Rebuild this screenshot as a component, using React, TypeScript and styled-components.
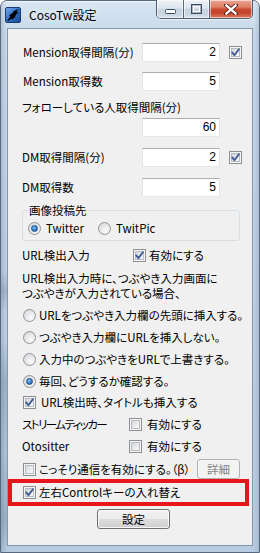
import React from 'react';
import styled, { createGlobalStyle } from 'styled-components';

const FONT = `"Noto Sans CJK JP", "Noto Sans", sans-serif`;

const GlobalStyle = createGlobalStyle`
  html, body { margin: 0; padding: 0; background: #ffffff; }
  body { font-family: ${FONT}; font-size: 12px; color: #000; }
  * { box-sizing: border-box; }
`;

const Window = styled.div`
  width: 260px;
  height: 553px;
  display: flex;
  flex-direction: column;
  padding: 0 6px 6px 6px;
  border: 1px solid #56697f;
  border-radius: 7px 7px 0 0;
  background:
    linear-gradient(180deg, rgba(0,0,0,0) 0, rgba(0,0,0,0) 270px, rgba(70,90,110,0.22) 290px, rgba(0,0,0,0) 310px, rgba(0,0,0,0) 340px, rgba(70,90,110,0.25) 380px, rgba(70,90,110,0.1) 450px, rgba(70,90,110,0.25) 520px, rgba(0,0,0,0) 553px) left top / 6px 100% no-repeat,
    linear-gradient(90deg, rgba(60,80,100,0.18) 0, rgba(255,255,255,0) 5px, rgba(255,255,255,0) 253px, rgba(60,80,100,0.15) 258px),
    linear-gradient(180deg, #d9e6f3 0%, #c6d8ea 6%, #bdd0e5 40%, #b7cbe1 100%);
  box-shadow: inset 0 1px 0 rgba(255,255,255,0.7);
`;

const TitleBar = styled.div`
  height: 27px;
  display: flex;
  align-items: flex-start;
  margin: 0 -6px;
  padding-left: 4px;
`;

const AppIcon = styled.svg`
  width: 16px;
  height: 16px;
  margin-top: 6px;
  flex: none;
`;

const TitleText = styled.span`
  margin-left: 8px;
  margin-top: 5px;
  font-family: ${FONT};
  font-size: 12px;
  line-height: 18px;
  color: #000;
  text-shadow: 0 0 6px rgba(255,255,255,0.9);
`;

const CaptionGroup = styled.div`
  margin-left: auto;
  margin-right: 6px;
  display: flex;
  height: 19px;
  margin-top: -1px;
  border: 1px solid #4b5d73;
  border-top: none;
  border-radius: 0 0 5px 5px;
  overflow: hidden;
  box-shadow: 0 1px 0 rgba(255,255,255,0.6);
`;

const CaptionButton = styled.div<{ $kind: 'min' | 'max' | 'close' }>`
  width: ${p => (p.$kind === 'close' ? 43 : 26)}px;
  height: 100%;
  display: flex;
  align-items: center;
  justify-content: center;
  border-left: ${p => (p.$kind === 'min' ? 'none' : '1px solid #56687d')};
  box-shadow: inset 0 0 0 1px rgba(255,255,255,0.55);
  background: ${p =>
    p.$kind === 'close'
      ? 'linear-gradient(180deg, #e9a593 0%, #dd7d64 40%, #c84a2f 52%, #c4432a 70%, #dc7b5a 100%)'
      : 'linear-gradient(180deg, #eef2f7 0%, #dde5ee 45%, #c9d4e1 52%, #cbd6e3 80%, #dbe4ee 100%)'};
`;

const Client = styled.div`
  flex: 1;
  display: flex;
  flex-direction: column;
  align-items: flex-start;
  background: #f0f0f0;
  border: 1px solid #8497ac;
  font-family: ${FONT};
  font-size: 11.5px;
  font-feature-settings: "palt";
  color: #000;
`;

const Row = styled.div<{ $mt?: number; $h?: number; $pl?: number }>`
  display: flex;
  align-items: center;
  height: ${p => p.$h ?? 20}px;
  margin-top: ${p => p.$mt ?? 0}px;
  padding-left: ${p => p.$pl ?? 15}px;
  width: 100%;
  white-space: nowrap;
`;

const Label = styled.span<{ $w?: number; $tight?: boolean }>`
  display: inline-block;
  width: ${p => (p.$w ? `${p.$w}px` : 'auto')};
  flex: none;
  line-height: 15px;
  letter-spacing: ${p => (p.$tight ? '-1.6px' : 'normal')};
`;

const NumberBox = styled.div`
  width: 78px;
  height: 19px;
  background: #ffffff;
  border: 1px solid #e2e3ea;
  border-top-color: #abadb3;
  border-bottom-color: #e3e9ef;
  text-align: right;
  padding-right: 3px;
  font-family: "Liberation Sans", Arial, sans-serif;
  font-size: 12px;
  line-height: 17px;
  flex: none;
`;

const BoxWrap = styled.span<{ $ml?: number }>`
  width: 13px;
  height: 13px;
  margin-left: ${p => p.$ml ?? 0}px;
  flex: none;
  position: relative;
  border: 1px solid #8f8f8f;
  background: #f6f6f6;
  display: inline-block;
`;

const BoxInner = styled.span`
  position: absolute;
  left: 1px;
  top: 1px;
  width: 9px;
  height: 9px;
  border: 1px solid #b6bcc3;
  background: linear-gradient(135deg, #d3d6da 0%, #e9eaec 55%, #fbfbfb 100%);
`;

const CheckSvg = styled.svg`
  position: absolute;
  left: 0;
  top: 0;
  width: 11px;
  height: 11px;
`;

const Check: React.FC<{ checked?: boolean; ml?: number }> = ({ checked, ml }) => (
  <BoxWrap $ml={ml}>
    <BoxInner />
    {checked && (
      <CheckSvg viewBox="0 0 11 11">
        <path d="M2.2 5.4 L4.4 8.2 L8.9 2.2" fill="none" stroke="#3f5c94" strokeWidth="1.9" strokeLinecap="round" strokeLinejoin="round" />
      </CheckSvg>
    )}
  </BoxWrap>
);

const RadioCircle = styled.span`
  width: 13px;
  height: 13px;
  flex: none;
  border-radius: 50%;
  border: 1px solid #939393;
  background: radial-gradient(circle at 65% 70%, #fbfbfb 0%, #e8e9eb 45%, #d0d3d7 100%);
  display: inline-flex;
  align-items: center;
  justify-content: center;
`;

const RadioDot = styled.span`
  width: 7px;
  height: 7px;
  border-radius: 50%;
  border: 1px solid #1f4f8e;
  background: radial-gradient(circle at 40% 35%, #8cc8f2 0%, #3f8ad4 45%, #184f9c 100%);
`;

const Radio: React.FC<{ checked?: boolean }> = ({ checked }) => (
  <RadioCircle>{checked && <RadioDot />}</RadioCircle>
);

const OptText = styled.span<{ $ml?: number }>`
  margin-left: ${p => p.$ml ?? 3}px;
  line-height: 15px;
`;

const GroupBox = styled.div`
  position: relative;
  margin-top: 13px;
  margin-left: 14px;
  width: 218px;
  height: 31px;
  border: 1px solid #d5dfe5;
  border-radius: 3px;
  display: flex;
  align-items: center;
  padding: 5px 0 0 5px;
`;

const Legend = styled.span`
  position: absolute;
  left: 5px;
  top: -8px;
  padding: 0 1px;
  background: #f0f0f0;
  line-height: 15px;
`;

const RadioItem = styled.span<{ $w?: number }>`
  display: inline-flex;
  align-items: center;
  width: ${p => (p.$w ? `${p.$w}px` : 'auto')};
`;

const Para = styled.div`
  margin-top: 6px;
  padding-left: 14px;
  white-space: nowrap;
`;

const ParaLine = styled.div`
  height: 15px;
  line-height: 15px;
`;

const PushButton = styled.div<{ $disabled?: boolean; $w: number }>`
  width: ${p => p.$w}px;
  height: 20px;
  flex: none;
  display: flex;
  align-items: center;
  justify-content: center;
  border-radius: 3px;
  border: 1px solid ${p => (p.$disabled ? '#adb2b5' : '#707070')};
  color: ${p => (p.$disabled ? '#838383' : '#000')};
  background: ${p =>
    p.$disabled
      ? '#f4f4f4'
      : 'linear-gradient(180deg, #f2f2f2 0%, #ebebeb 50%, #dddddd 51%, #cfcfcf 100%)'};
  box-shadow: inset 0 0 0 1px ${p => (p.$disabled ? '#f4f4f4' : 'rgba(255,255,255,0.8)')};
  line-height: 15px;
`;

const DetailButtonSlot = styled.div`
  margin-left: auto;
  margin-right: 12px;
`;

const Highlight = styled.div`
  width: 241px;
  height: 27px;
  margin-top: -1px;
  border: 4px solid #e8161b;
  display: flex;
  align-items: center;
  padding-left: 11px;
  white-space: nowrap;
`;

const FooterButtonRow = styled.div`
  margin-top: 3px;
  padding-left: 89px;
`;

export default function App() {
  return (
    <>
      <GlobalStyle />
      <Window>
        <TitleBar>
          <AppIcon viewBox="0 0 16 16">
            <defs>
              <linearGradient id="ig" x1="0" y1="0" x2="1" y2="1">
                <stop offset="0" stopColor="#7fb0ea" />
                <stop offset="0.5" stopColor="#2f6fc4" />
                <stop offset="1" stopColor="#1a468f" />
              </linearGradient>
            </defs>
            <rect x="0.5" y="0.5" width="15" height="15" rx="1.5" fill="url(#ig)" stroke="#16396f" strokeWidth="1" />
            <path d="M2 14 L5 10 L4.5 8 L7 6.5 L9 4 L13.5 2 L11.5 5 L14 5.5 L11 7.5 L10 10.5 L8 11.5 L7 13 L6 11.5 L4 13.5 Z" fill="#000" />
          </AppIcon>
          <TitleText>CosoTw設定</TitleText>
          <CaptionGroup>
            <CaptionButton $kind="min">
              <svg width="11" height="5" viewBox="0 0 11 5" style={{ marginTop: 5 }}>
                <rect x="0.5" y="0.5" width="10" height="4" rx="1" fill="#fff" stroke="#3b4b60" />
              </svg>
            </CaptionButton>
            <CaptionButton $kind="max">
              <svg width="11" height="10" viewBox="0 0 11 10">
                <rect x="0.5" y="0.5" width="10" height="9" fill="none" stroke="#3b4b60" />
                <rect x="2.5" y="2.5" width="6" height="5" fill="none" stroke="#ffffff" />
                <rect x="1.5" y="1.5" width="8" height="7" fill="none" stroke="#8a98a8" strokeOpacity="0.6" />
              </svg>
            </CaptionButton>
            <CaptionButton $kind="close">
              <svg width="14" height="11" viewBox="0 0 14 11">
                <path d="M2 1 L12 10 M12 1 L2 10" stroke="#5a1a10" strokeWidth="4" strokeLinecap="round" />
                <path d="M2.3 1.3 L11.7 9.7 M11.7 1.3 L2.3 9.7" stroke="#ffffff" strokeWidth="2.4" strokeLinecap="round" />
              </svg>
            </CaptionButton>
          </CaptionGroup>
        </TitleBar>
        <Client>
          <Row $mt={13}>
            <Label $w={119}>Mension取得間隔(分)</Label>
            <NumberBox>2</NumberBox>
            <Check checked ml={9} />
          </Row>
          <Row $mt={9}>
            <Label $w={119}>Mension取得数</Label>
            <NumberBox>5</NumberBox>
          </Row>
          <Row $mt={6} $pl={14}>
            <Label>フォローしている人取得間隔(分)</Label>
          </Row>
          <Row $pl={134}>
            <NumberBox>60</NumberBox>
          </Row>
          <Row $mt={10} $pl={14}>
            <Label $w={120}>DM取得間隔(分)</Label>
            <NumberBox>2</NumberBox>
            <Check checked ml={9} />
          </Row>
          <Row $mt={10} $pl={14}>
            <Label $w={120}>DM取得数</Label>
            <NumberBox>5</NumberBox>
          </Row>
          <GroupBox>
            <Legend>画像投稿先</Legend>
            <RadioItem $w={70}>
              <Radio checked />
              <OptText $ml={5}>Twitter</OptText>
            </RadioItem>
            <RadioItem>
              <Radio />
              <OptText $ml={5}>TwitPic</OptText>
            </RadioItem>
          </GroupBox>
          <Row $mt={4} $pl={14}>
            <Label $w={111}>URL検出入力</Label>
            <Check checked />
            <OptText>有効にする</OptText>
          </Row>
          <Para>
            <ParaLine>URL検出入力時に、つぶやき入力画面に</ParaLine>
            <ParaLine>つぶやきが入力されている場合、</ParaLine>
          </Para>
          <Row $mt={3} $h={22}>
            <Radio />
            <OptText>URLをつぶやき入力欄の先頭に挿入する。</OptText>
          </Row>
          <Row $h={22}>
            <Radio />
            <OptText>つぶやき入力欄にURLを挿入しない。</OptText>
          </Row>
          <Row $h={22}>
            <Radio />
            <OptText>入力中のつぶやきをURLで上書きする。</OptText>
          </Row>
          <Row $h={22}>
            <Radio checked />
            <OptText>毎回、どうするか確認する。</OptText>
          </Row>
          <Row $h={21}>
            <Check checked />
            <OptText $ml={5}>URL検出時、タイトルも挿入する</OptText>
          </Row>
          <Row $h={22} $pl={14}>
            <Label $w={107} $tight>ストリームティッカー</Label>
            <Check />
            <OptText $ml={5}>有効にする</OptText>
          </Row>
          <Row $h={22} $pl={14}>
            <Label $w={107}>Otositter</Label>
            <Check />
            <OptText $ml={5}>有効にする</OptText>
          </Row>
          <Row $mt={1} $h={22}>
            <Check />
            <OptText>こっそり通信を有効にする。（β）</OptText>
            <DetailButtonSlot>
              <PushButton $disabled $w={43}>詳細</PushButton>
            </DetailButtonSlot>
          </Row>
          <Highlight>
            <Check checked />
            <OptText>左右Controlキーの入れ替え</OptText>
          </Highlight>
          <FooterButtonRow>
            <PushButton $w={73}>設定</PushButton>
          </FooterButtonRow>
        </Client>
      </Window>
    </>
  );
}
